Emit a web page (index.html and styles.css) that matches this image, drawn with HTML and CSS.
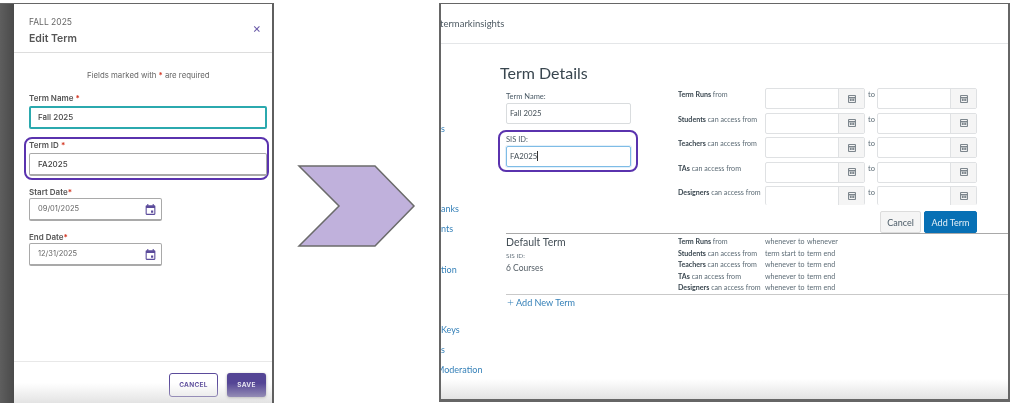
FILE: index.html
```html
<!DOCTYPE html>
<html lang="en">
<head>
    <meta charset="UTF-8">
    <meta name="viewport" content="width=device-width, initial-scale=1.0">
    <title>Edit Term vs Term Details</title>
    <link rel="stylesheet" href="styles.css">
</head>
<body>
    <svg width="0" height="0" class="defs">
        <defs>
            <symbol id="cal" viewBox="0 0 24 24">
                <path d="M19 4h-1V2h-2v2H8V2H6v2H5a2 2 0 0 0-2 2v14a2 2 0 0 0 2 2h14a2 2 0 0 0 2-2V6a2 2 0 0 0-2-2zm0 16H5V9h14v11zm-6-6h4v4h-4z"/>
            </symbol>
            <symbol id="cal-grid" viewBox="0 0 24 24">
                <path d="M3 3h18v18H3zM5 5v3h14V5zM5 10v9h14v-9z"/>
                <path d="M7 11.500h3v2H7zM10.800 11.500h3v2h-3zM14.500 11.500h3v2h-3zM7 15h3v2H7zM10.800 15h3v2h-3zM14.500 15h3v2h-3z"/>
            </symbol>
        </defs>
    </svg>

    <div class="shot shot-left">
        <div class="backdrop"></div>
        <div class="modal">
            <div class="modal-head">
                <div>
                    <div class="eyebrow">FALL 2025</div>
                    <div class="modal-title">Edit Term</div>
                </div>
                <span class="close">×</span>
            </div>
            <div class="modal-body">
                <p class="req-note">Fields marked with <span class="req">*</span> are required</p>
                <label class="f-label">Term Name <span class="req">*</span></label>
                <div class="f-input f-focus">Fall 2025</div>
                <div class="callout callout-left">
                    <label class="f-label">Term ID <span class="req">*</span></label>
                    <div class="f-input">FA2025</div>
                </div>
                <label class="f-label f-date-label">Start Date<span class="req">*</span></label>
                <div class="f-input f-date">09/01/2025 <svg class="ic-cal"><use href="#cal"/></svg></div>
                <label class="f-label f-date-label">End Date<span class="req">*</span></label>
                <div class="f-input f-date">12/31/2025 <svg class="ic-cal"><use href="#cal"/></svg></div>
            </div>
            <div class="modal-foot">
                <button class="btn btn-line">CANCEL</button>
                <button class="btn btn-fill">SAVE</button>
            </div>
        </div>
        <div class="fade"></div>
    </div>

    <svg class="arrow" width="120" height="84" viewBox="0 0 120 84">
        <polygon points="2,2 78,2 117,42 78,82 2,82 42,42" fill="#c0b1dc" stroke="#6b6b6b" stroke-width="1.500"/>
    </svg>

    <div class="shot shot-right">
        <div class="topbar">termarkinsights</div>
        <div class="canvas-body">
            <ul class="side-nav">
                <li>s</li>
                <li></li>
                <li></li>
                <li></li>
                <li>anks</li>
                <li>nts</li>
                <li></li>
                <li>tion</li>
                <li></li>
                <li></li>
                <li>Keys</li>
                <li>s</li>
                <li class="clip">Moderation</li>
            </ul>
            <div class="main">
                <h1>Term Details</h1>
                <div class="form-row">
                    <div class="form-left">
                        <div class="group">
                            <label class="c-label">Term Name:</label>
                            <div class="c-input">Fall 2025</div>
                        </div>
                        <div class="callout callout-right">
                            <label class="c-label">SIS ID:</label>
                            <div class="c-input c-focus">FA2025<span class="caret"></span></div>
                        </div>
                    </div>
                    <div class="form-right">
                        <div class="date-grid">
                            <div class="d-label"><b>Term Runs</b> from</div>
                            <div class="d-input"><span class="d-btn"><svg class="ic-grid"><use href="#cal-grid"/></svg></span></div>
                            <div class="d-to">to</div>
                            <div class="d-input"><span class="d-btn"><svg class="ic-grid"><use href="#cal-grid"/></svg></span></div>

                            <div class="d-label"><b>Students</b> can access from</div>
                            <div class="d-input"><span class="d-btn"><svg class="ic-grid"><use href="#cal-grid"/></svg></span></div>
                            <div class="d-to">to</div>
                            <div class="d-input"><span class="d-btn"><svg class="ic-grid"><use href="#cal-grid"/></svg></span></div>

                            <div class="d-label"><b>Teachers</b> can access from</div>
                            <div class="d-input"><span class="d-btn"><svg class="ic-grid"><use href="#cal-grid"/></svg></span></div>
                            <div class="d-to">to</div>
                            <div class="d-input"><span class="d-btn"><svg class="ic-grid"><use href="#cal-grid"/></svg></span></div>

                            <div class="d-label"><b>TAs</b> can access from</div>
                            <div class="d-input"><span class="d-btn"><svg class="ic-grid"><use href="#cal-grid"/></svg></span></div>
                            <div class="d-to">to</div>
                            <div class="d-input"><span class="d-btn"><svg class="ic-grid"><use href="#cal-grid"/></svg></span></div>

                            <div class="d-label"><b>Designers</b> can access from</div>
                            <div class="d-input d-cut"><span class="d-btn"><svg class="ic-grid"><use href="#cal-grid"/></svg></span></div>
                            <div class="d-to">to</div>
                            <div class="d-input d-cut"><span class="d-btn"><svg class="ic-grid"><use href="#cal-grid"/></svg></span></div>
                        </div>
                        <div class="form-btns">
                            <button class="c-btn">Cancel</button>
                            <button class="c-btn c-btn-blue">Add Term</button>
                        </div>
                    </div>
                </div>
                <div class="term-row">
                    <div class="term-info">
                        <div class="term-name">Default Term</div>
                        <div class="term-sis">SIS ID:</div>
                        <div class="term-count">6 Courses</div>
                    </div>
                    <div class="term-table">
                        <div class="d-label"><b>Term Runs</b> from</div><span>whenever</span><span>to</span><span>whenever</span>
                        <div class="d-label"><b>Students</b> can access from</div><span>term start</span><span>to</span><span>term end</span>
                        <div class="d-label"><b>Teachers</b> can access from</div><span>whenever</span><span>to</span><span>term end</span>
                        <div class="d-label"><b>TAs</b> can access from</div><span>whenever</span><span>to</span><span>term end</span>
                        <div class="d-label"><b>Designers</b> can access from</div><span>whenever</span><span>to</span><span>term end</span>
                    </div>
                </div>
                <a class="add-term"><span class="plus">+</span> Add New Term</a>
            </div>
        </div>
        <div class="fade"></div>
    </div>
</body>
</html>
```

FILE: styles.css
```css
* { box-sizing: border-box; }

body {
    margin: 0;
    width: 1016px;
    height: 403px;
    background: #fff;
    position: relative;
    overflow: hidden;
}
.defs { position: absolute; }

.shot {
    position: absolute;
    top: 3px;
    display: flex;
    overflow: hidden;
    filter: blur(0.3px);
}
.fade {
    position: absolute;
    left: 0;
    right: 0;
    bottom: 0;
    height: 20px;
    background: linear-gradient(rgba(225,225,225,0), rgba(215,215,215,0.7));
}
.shot-left .fade { left: 14px; }

/* left screenshot */
.shot-left {
    left: 0;
    width: 274px;
    height: 400px;
    border-top: 1px solid #666;
    border-right: 2px solid #5f5f5f;
    font-family: Inter, "Liberation Sans", sans-serif;
    color: #555;
}
.backdrop {
    width: 14px;
    background: linear-gradient(90deg, #5e5e5e, #4a4a4a);
}
.modal {
    flex: 1;
    display: flex;
    flex-direction: column;
    background: #fff;
}
.modal-head {
    height: 49px;
    padding: 13px 11px 0 15px;
    border-bottom: 1px solid #ddd;
    display: flex;
    justify-content: space-between;
}
.eyebrow { font-size: 8.500px; line-height: 11px; color: #666; }
.modal-title { font-size: 10.500px; font-weight: 600; line-height: 13px; margin-top: 4px; color: #555; }
.close { font-size: 13px; line-height: 22px; color: #6a5aa8; }

.modal-body { flex: 1; padding: 0 5px 0 15px; }
.req-note {
    font-size: 7.800px;
    line-height: 11px;
    margin: 17px 0 12px;
    padding-left: 58px;
    color: #666;
}
.req { color: #d2321e; font-weight: 600; }
.f-label { display: block; font-size: 8px; font-weight: 600; line-height: 11px; color: #555; }
.f-input {
    height: 23px;
    margin-top: 2px;
    padding-left: 8px;
    border: 1px solid #a9a9a9;
    border-bottom-width: 2px;
    border-radius: 2px;
    font-size: 8px;
    font-weight: 500;
    line-height: 20px;
    color: #444;
    background: #fff;
}
.f-focus { border: 2px solid #2ba9ae; line-height: 19px; padding-left: 7px; }

.callout {
    border: 2px solid #5a33ae;
    border-radius: 8px;
}
.callout-left {
    height: 43px;
    margin: 8px -2px 0 -5px;
    padding: 1px 0 0 3px;
}
.callout-left .f-input { margin-top: 2px; }

.f-date-label { margin-top: 7px; font-weight: 600; }
.f-date {
    width: 133px;
    margin-top: 0;
    display: flex;
    align-items: center;
    justify-content: space-between;
    padding-right: 4px;
    font-size: 7.500px;
    font-weight: 400;
    color: #666;
}
.f-date + .f-date-label { margin-top: 11px; }
.ic-cal { width: 13px; height: 13px; fill: #5b4b9b; }

.modal-foot {
    height: 42px;
    border-top: 1px solid #e8e8e8;
    padding: 11px 6px 0 0;
    display: flex;
    justify-content: flex-end;
    align-items: flex-start;
    gap: 9px;
}
.btn {
    height: 24px;
    font-family: Inter, "Liberation Sans", sans-serif;
    font-size: 6.500px;
    font-weight: 700;
    letter-spacing: 0.3px;
    border-radius: 3px;
    padding: 0;
}
.btn-line { width: 49px; background: #fff; border: 1px solid #5b4b9b; color: #5b4b9b; }
.btn-fill { width: 39px; background: #544595; border: 0; color: #e8e6f2; box-shadow: 0 1px 3px rgba(0,0,0,0.35); }

/* arrow between the two */
.arrow { position: absolute; left: 297px; top: 164px; }

/* right screenshot */
.shot-right {
    left: 439px;
    width: 571px;
    height: 399px;
    flex-direction: column;
    border: 2px solid #666;
    border-top-width: 1px;
    border-bottom-width: 3px;
    font-family: Lato, "Liberation Sans", sans-serif;
    color: #2d3b45;
    background: #fff;
}
.topbar {
    height: 40px;
    flex: none;
    border-bottom: 1px solid #e4e6e8;
    font-size: 9.500px;
    line-height: 40px;
    text-indent: -1px;
    overflow: hidden;
    color: #4f5b64;
}
.canvas-body { flex: 1; display: flex; }
.side-nav {
    width: 59px;
    flex: none;
    margin: 0;
    padding: 75px 0 0;
    list-style: none;
    font-size: 9px;
    color: #3580b8;
}
.side-nav li { height: 20.100px; line-height: 20px; white-space: nowrap; overflow: hidden; }
.side-nav .clip { text-indent: -5px; }

.main { flex: 1; min-width: 0; }
h1 {
    font-size: 16px;
    font-weight: 400;
    line-height: 20px;
    margin: 19px 0 5px;
    color: #39464f;
}
.form-row { display: flex; height: 145px; }
.form-left { width: 180px; flex: none; margin-left: -2px; }
.group { padding: 3px 0 0 8px; height: 42px; }
.c-label { display: block; font-size: 7.500px; line-height: 11px; color: #4a5a66; }
.c-input {
    width: 125px;
    height: 21px;
    margin-top: 1px;
    padding-left: 3px;
    border: 1px solid #d9dcde;
    border-radius: 2px;
    font-size: 7.800px;
    line-height: 19px;
    color: #444f57;
}
.c-focus { border-color: #7ebce6; box-shadow: 0 0 0 1px #e2f0fa; }
.caret { display: inline-block; width: 1px; height: 10px; background: #333; vertical-align: -2px; }
.callout-right { width: 140px; height: 42px; padding: 2px 0 0 6px; }
.callout-right .c-input { margin-top: 1px; }

.date-grid {
    display: grid;
    grid-template-columns: 87px 100px 12px 100px;
    grid-auto-rows: 24.600px;
    height: 123px;
}
.d-label { font-size: 7.100px; line-height: 11px; color: #5c6b75; white-space: nowrap; }
.d-label b { color: #3a4750; font-weight: 700; }
.date-grid .d-label { padding-top: 1px; }
.d-to { font-size: 7.500px; line-height: 11px; padding: 1px 0 0 3px; color: #5c6b75; }
.d-input {
    height: 21px;
    border: 1px solid #dfe1e3;
    border-radius: 2px;
    display: flex;
    justify-content: flex-end;
}
.d-cut { height: 19px; border-bottom: 0; }
.d-btn {
    width: 26px;
    background: #f5f5f5;
    border-left: 1px solid #dfe1e3;
    display: flex;
    align-items: center;
    justify-content: center;
}
.ic-grid { width: 10px; height: 10px; fill: #56626b; }

.form-btns {
    display: flex;
    justify-content: flex-end;
    gap: 3px;
    width: 299px;
}
.c-btn {
    height: 22px;
    padding: 0;
    font-family: Lato, "Liberation Sans", sans-serif;
    font-size: 9px;
    border-radius: 2px;
}
.c-btn { width: 41px; background: #f5f5f5; border: 1px solid #dcdcdc; color: #4a5a66; }
.c-btn-blue { width: 53px; background: #0770b5; border: 1px solid #0770b5; color: #e6f1f8; }

.term-row {
    margin-left: 6px;
    height: 62px;
    border-top: 1px solid #a9a9a9;
    border-bottom: 1px solid #c9c9c9;
    display: flex;
}
.term-info { width: 172px; flex: none; padding-top: 1px; }
.term-name { font-size: 10.500px; line-height: 14px; color: #444f57; }
.term-sis { font-size: 6.500px; line-height: 9px; margin-top: 2px; color: #66747e; }
.term-count { font-size: 8.500px; line-height: 12px; margin-top: 2px; color: #555f67; }
.term-table {
    display: grid;
    grid-template-columns: 87px 33px 9px auto;
    grid-auto-rows: 11.600px;
    padding-top: 2px;
    font-size: 7.100px;
    line-height: 11.600px;
    color: #5c6b75;
}
.term-table .d-label { line-height: 11.600px; }
.add-term {
    display: block;
    margin: 0 0 0 7px;
    font-size: 9.100px;
    line-height: 14px;
    color: #3580b8;
}
.plus { font-size: 12px; font-weight: 300; }
```
